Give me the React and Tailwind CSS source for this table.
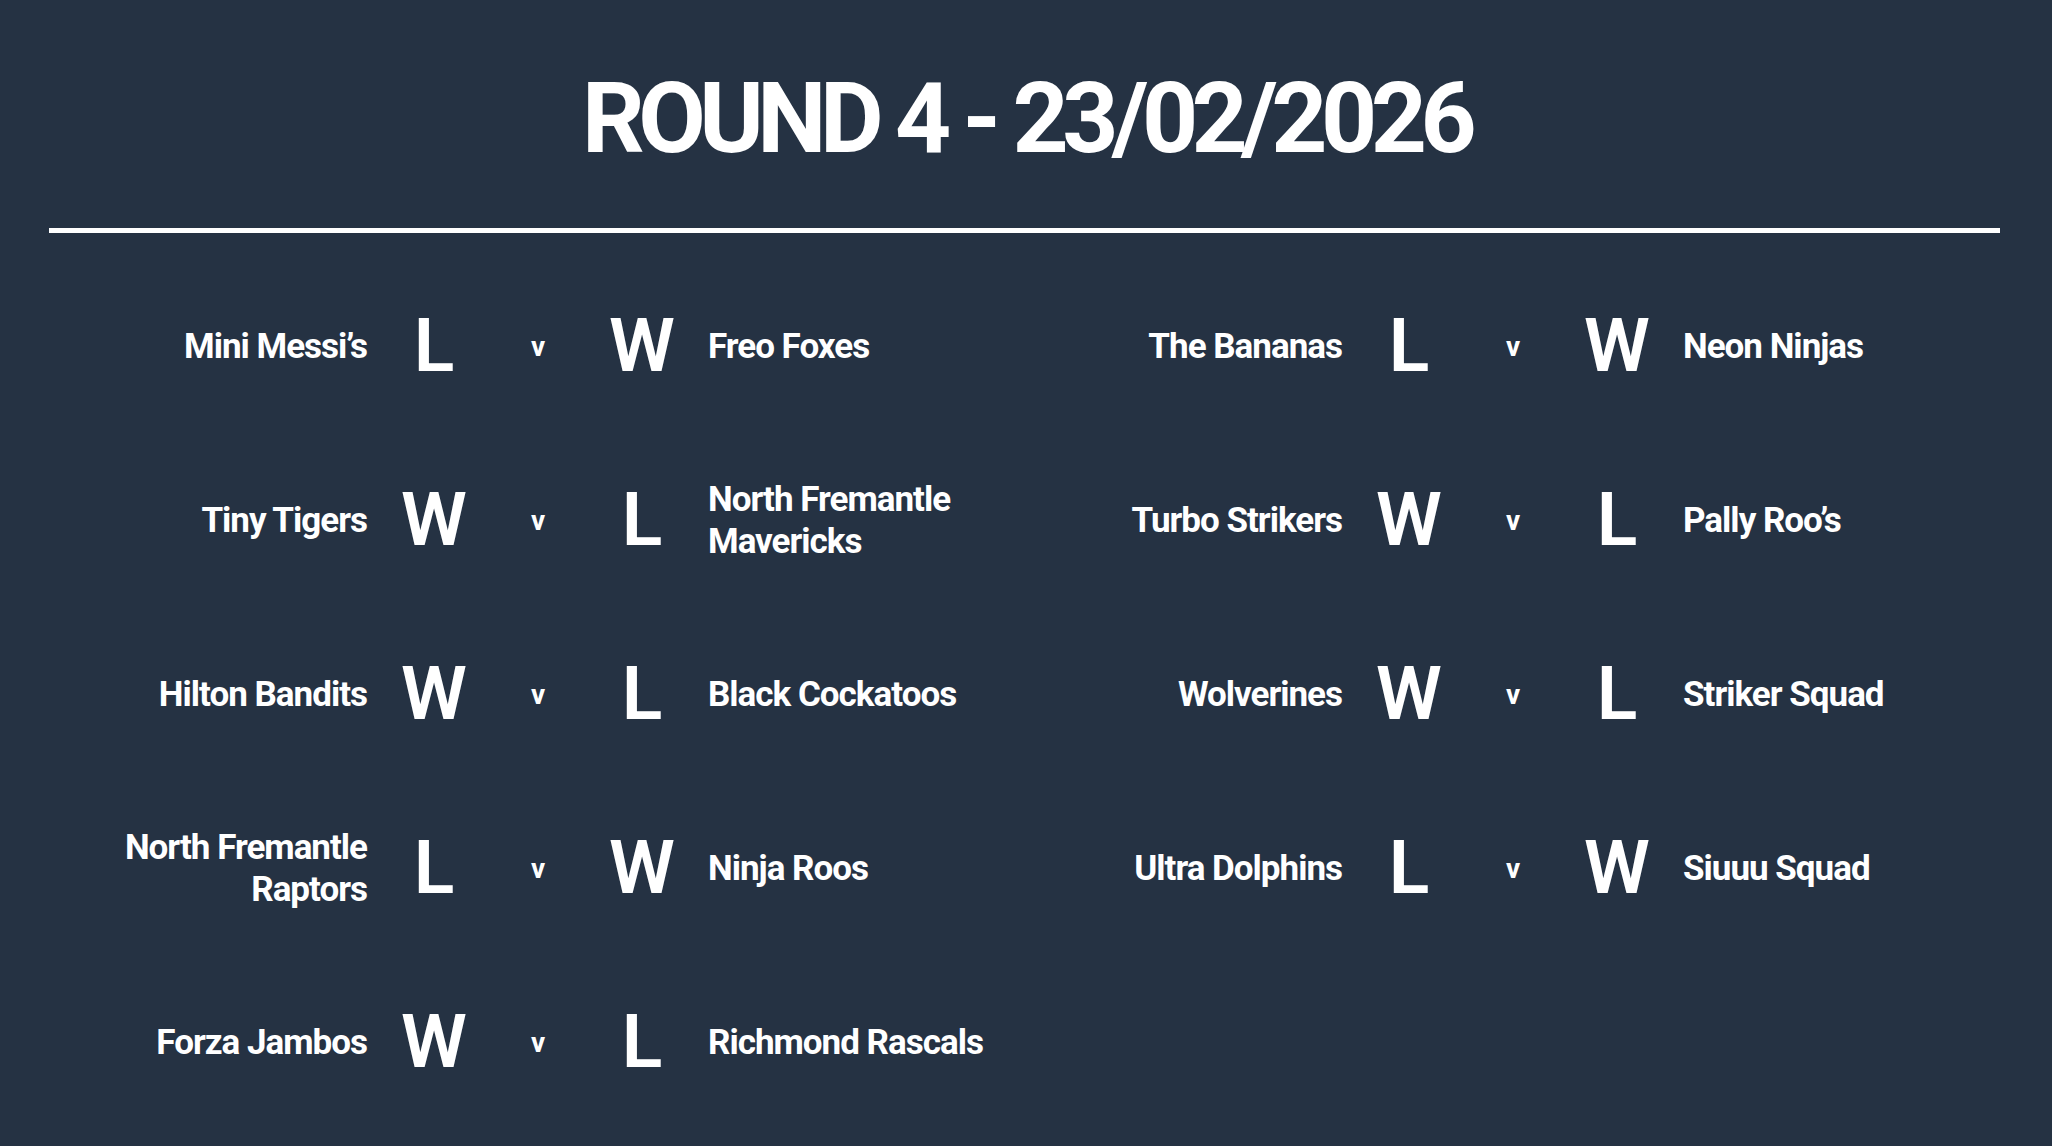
import React from "react";

const left = [
  ["Mini Messi’s", "L", "W", "Freo Foxes"],
  ["Tiny Tigers", "W", "L", "North Fremantle Mavericks"],
  ["Hilton Bandits", "W", "L", "Black Cockatoos"],
  ["North Fremantle Raptors", "L", "W", "Ninja Roos"],
  ["Forza Jambos", "W", "L", "Richmond Rascals"],
];

const right = [
  ["The Bananas", "L", "W", "Neon Ninjas"],
  ["Turbo Strikers", "W", "L", "Pally Roo’s"],
  ["Wolverines", "W", "L", "Striker Squad"],
  ["Ultra Dolphins", "L", "W", "Siuuu Squad"],
];

function Match({ m }) {
  const [a, ra, rb, b] = m;
  return (
    <div className="flex h-[174px] items-center">
      <div className="w-[318px] pt-[5px] text-right text-[35px] font-bold leading-[42px] tracking-[-1px]">
        {a}
      </div>
      <div className="ml-[27px] w-[80px] pt-[2px] text-center text-[75px] font-semibold leading-[75px]">
        {ra}
      </div>
      <div className="mt-[5px] w-[128px] text-center text-[28px] font-bold leading-[28px]">
        v
      </div>
      <div className="w-[80px] pt-[2px] text-center text-[75px] font-semibold leading-[75px]">
        {rb}
      </div>
      <div className="ml-[26px] w-[300px] pt-[5px] text-left text-[35px] font-bold leading-[42px] tracking-[-1px]">
        {b}
      </div>
    </div>
  );
}

export default function App() {
  return (
    <div
      className="min-h-[1146px] w-full bg-[#253243] text-white"
      style={{ fontFamily: "Roboto, 'Liberation Sans', sans-serif" }}
    >
      <h1 className="pt-[70px] text-center text-[98px] font-bold leading-[98px] tracking-[-6.5px]">
        ROUND 4 - 23/02/2026
      </h1>
      <div className="ml-[49px] mt-[60px] h-[5px] w-[1951px] bg-white" />
      <div className="ml-[49px] mt-[24px] grid w-[1950px] grid-cols-2">
        <div className="flex flex-col">
          {left.map((m, i) => (
            <Match key={i} m={m} />
          ))}
        </div>
        <div className="flex flex-col">
          {right.map((m, i) => (
            <Match key={i} m={m} />
          ))}
        </div>
      </div>
    </div>
  );
}
